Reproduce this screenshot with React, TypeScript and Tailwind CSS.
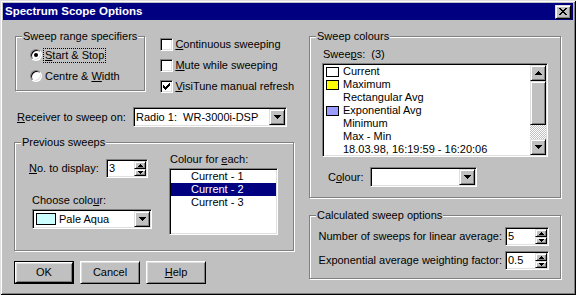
import React from 'react';

const sunken =
  'border border-t-[#808080] border-l-[#808080] border-r-white border-b-white shadow-[inset_1px_1px_0_#000,inset_-1px_-1px_0_#dfdfdf]';
const raised =
  'bg-[#c0c0c0] border border-t-[#dfdfdf] border-l-[#dfdfdf] border-r-black border-b-black shadow-[inset_1px_1px_0_#fff,inset_-1px_-1px_0_#808080]';

const DownArrow = () => (
  <svg width="7" height="4" shapeRendering="crispEdges">
    <path d="M0 0h7v1H0zM1 1h5v1H1zM2 2h3v1H2zM3 3h1v1H3z" fill="#000" />
  </svg>
);

const UpArrow = () => (
  <svg width="7" height="4" shapeRendering="crispEdges">
    <path d="M3 0h1v1H3zM2 1h3v1H2zM1 2h5v1H1zM0 3h7v1H0z" fill="#000" />
  </svg>
);

const SmallUp = () => (
  <svg width="5" height="3" shapeRendering="crispEdges">
    <path d="M2 0h1v1H2zM1 1h3v1H1zM0 2h5v1H0z" fill="#000" />
  </svg>
);

const SmallDown = () => (
  <svg width="5" height="3" shapeRendering="crispEdges">
    <path d="M0 0h5v1H0zM1 1h3v1H1zM2 2h1v1H2z" fill="#000" />
  </svg>
);

function Group({ label, className, children }: { label: string; className: string; children?: React.ReactNode }) {
  return (
    <div className={`relative border border-[#808080] shadow-[inset_1px_1px_0_#fff,1px_1px_0_#fff] ${className}`}>
      <span className="absolute -top-[7px] left-[6px] bg-[#c0c0c0] px-[1px] whitespace-nowrap">{label}</span>
      {children}
    </div>
  );
}

function Checkbox({ checked, children }: { checked?: boolean; children: React.ReactNode }) {
  return (
    <div className="flex items-center h-[13px]">
      <div className={`${sunken} bg-white w-[13px] h-[13px] flex items-center justify-center`}>
        {checked && (
          <svg width="7" height="7" shapeRendering="crispEdges">
            <path
              d="M6 0h1v3H6zM5 1h1v3H5zM4 2h1v3H4zM3 3h1v3H3zM2 4h1v3H2zM1 3h1v3H1zM0 2h1v3H0z"
              fill="#000"
            />
          </svg>
        )}
      </div>
      <span className="ml-[2px] whitespace-nowrap">{children}</span>
    </div>
  );
}

function Radio({ checked, focused, children }: { checked?: boolean; focused?: boolean; children: React.ReactNode }) {
  return (
    <div className="flex items-center h-[16px]">
      <div
        className={`${sunken} rounded-full bg-white w-[12px] h-[12px] flex items-center justify-center`}
      >
        {checked && <div className="w-[4px] h-[4px] rounded-full bg-black" />}
      </div>
      <span
        className={`ml-[1px] px-[1px] whitespace-nowrap border ${focused ? 'border-dotted border-black' : 'border-transparent'}`}
      >
        {children}
      </span>
    </div>
  );
}

function Combo({ className, children }: { className: string; children?: React.ReactNode }) {
  return (
    <div className={`${sunken} bg-white p-[1px] flex h-[20px] ${className}`}>
      <div className="flex-1 flex items-center min-w-0">{children}</div>
      <div className={`${raised} w-[16px] h-[16px] flex items-center justify-center`}>
        <DownArrow />
      </div>
    </div>
  );
}

function Spinner({ value, className }: { value: string; className: string }) {
  return (
    <div className={`${sunken} bg-white p-[1px] flex h-[19px] ${className}`}>
      <div className="flex-1 flex items-center pl-[1px]">{value}</div>
      <div className="w-[12px] flex flex-col">
        <div className={`${raised} h-[8px] flex items-center justify-center`}>
          <SmallUp />
        </div>
        <div className={`${raised} flex-1 flex items-center justify-center`}>
          <SmallDown />
        </div>
      </div>
    </div>
  );
}

function PushButton({ isDefault, children }: { isDefault?: boolean; children: React.ReactNode }) {
  return (
    <div className={`w-[60px] h-[23px] ${isDefault ? 'border border-black' : ''}`}>
      <div className="w-full h-full bg-[#c0c0c0] border border-t-white border-l-white border-r-black border-b-black shadow-[inset_1px_1px_0_#dfdfdf,inset_-1px_-1px_0_#808080] flex items-center justify-center">
        {children}
      </div>
    </div>
  );
}

const sweeps = [
  { name: 'Current', swatch: 'bg-white' },
  { name: 'Maximum', swatch: 'bg-[#ffff00]' },
  { name: 'Rectangular Avg', swatch: '' },
  { name: 'Exponential Avg', swatch: 'bg-[#9c9cff]' },
  { name: 'Minimum', swatch: '' },
  { name: 'Max - Min', swatch: '' },
  { name: '18.03.98, 16:19:59 - 16:20:06', swatch: '' },
];

export default function App() {
  return (
    <div className="w-[576px] h-[295px] overflow-hidden bg-[#c0c0c0] text-black text-[11px] leading-[13px] font-['Liberation_Sans',Arial,sans-serif] shadow-[inset_1px_1px_0_#dfdfdf,inset_-1px_-1px_0_#000,inset_2px_2px_0_#fff,inset_-2px_-2px_0_#808080]">
      {/* Title bar */}
      <div className="mx-[3px] mt-[3px] h-[17px] bg-[#000080] flex items-center pl-[2px] pr-[2px]">
        <span className="text-white font-bold text-[11.5px]">Spectrum Scope Options</span>
        <div className={`${raised} ml-auto w-[16px] h-[14px] flex items-center justify-center`}>
          <svg width="8" height="7" shapeRendering="crispEdges">
            <path
              d="M0 0h2v1H0zM6 0h2v1H6zM1 1h2v1H1zM5 1h2v1H5zM2 2h4v1H2zM3 3h2v1H3zM2 4h4v1H2zM1 5h2v1H1zM5 5h2v1H5zM0 6h2v1H0zM6 6h2v1H6z"
              fill="#000"
            />
          </svg>
        </div>
      </div>

      <div className="flex">
        {/* Left column */}
        <div className="ml-[14px] w-[280px]">
          <div className="flex items-start h-[71px]">
            <Group label="Sweep range specifiers" className="ml-[1px] mt-[16px] w-[133px] h-[55px]">
              <div className="pl-[14px] pt-[10px] flex flex-col gap-[5px]">
                <Radio checked focused>
                  <u>S</u>tart &amp; Stop
                </Radio>
                <Radio>
                  Centre &amp; <u>W</u>idth
                </Radio>
              </div>
            </Group>
            <div className="ml-[15px] mt-[18px] flex flex-col gap-[8px]">
              <Checkbox>
                <u>C</u>ontinuous sweeping
              </Checkbox>
              <Checkbox>
                <u>M</u>ute while sweeping
              </Checkbox>
              <Checkbox checked>
                <u>V</u>isiTune manual refresh
              </Checkbox>
            </div>
          </div>

          <div className="mt-[16px] h-[20px] flex items-center">
            <span className="ml-[3px] w-[116px] whitespace-nowrap">
              <u>R</u>eceiver to sweep on:
            </span>
            <Combo className="w-[154px]">
              <span className="pl-[1px] whitespace-pre">Radio 1:  WR-3000i-DSP</span>
            </Combo>
          </div>

          <Group label="Previous sweeps" className="mt-[15px] w-[280px] h-[109px]">
            <div className="flex">
              <div className="pl-[14px] w-[140px]">
                <div className="mt-[16px] h-[19px] flex items-center">
                  <span className="w-[77px] whitespace-nowrap">
                    <u>N</u>o. to display:
                  </span>
                  <Spinner value="3" className="w-[42px]" />
                </div>
                <div className="ml-[3px] mt-[16px] whitespace-nowrap">
                  Choose colo<u>u</u>r:
                </div>
                <Combo className="ml-[3px] mt-[2px] w-[120px]">
                  <div className="ml-[2px] w-[20px] h-[12px] border border-black bg-[#ccffff]" />
                  <span className="ml-[3px]">Pale Aqua</span>
                </Combo>
              </div>
              <div className="ml-[14px] pt-[10px]">
                <div className="ml-[1px] whitespace-nowrap">
                  Colour for <u>e</u>ach:
                </div>
                <div className={`${sunken} bg-white p-[1px] mt-[2px] w-[109px] h-[67px]`}>
                  <div className="h-[13px] pl-[20px]">Current - 1</div>
                  <div className="h-[13px] pl-[20px] bg-[#000080] text-white">Current - 2</div>
                  <div className="h-[13px] pl-[20px]">Current - 3</div>
                </div>
              </div>
            </div>
          </Group>

          <div className="mt-[10px] flex gap-[6px]">
            <PushButton isDefault>OK</PushButton>
            <PushButton>Cancel</PushButton>
            <PushButton>
              <span>
                <u>H</u>elp
              </span>
            </PushButton>
          </div>
        </div>

        {/* Right column */}
        <div className="ml-[15px] w-[252px]">
          <Group label="Sweep colours" className="mt-[16px] w-[252px] h-[162px]">
            <div className="pl-[13px] pt-[11px]">
              <div className="whitespace-pre">
                Swee<u>p</u>s:  (3)
              </div>
              <div className={`${sunken} bg-white p-[1px] -ml-[1px] mt-[2px] w-[226px] h-[94px] flex`}>
                <div className="flex-1 min-w-0">
                  {sweeps.map((s) => (
                    <div key={s.name} className="h-[13px] flex items-center pl-[2px] whitespace-nowrap">
                      <div
                        className={`w-[13px] h-[10px] mr-[4px] ${s.swatch ? `border border-black ${s.swatch}` : ''}`}
                      />
                      {s.name}
                    </div>
                  ))}
                </div>
                <div className="w-[16px] flex flex-col">
                  <div className={`${raised} h-[16px] flex items-center justify-center`}>
                    <UpArrow />
                  </div>
                  <div className={`${raised} h-[44px]`} />
                  <div className="flex-1 bg-[repeating-conic-gradient(#fff_0_25%,#c0c0c0_0_50%)] bg-[length:2px_2px]" />
                  <div className={`${raised} h-[16px] flex items-center justify-center`}>
                    <DownArrow />
                  </div>
                </div>
              </div>
              <div className="mt-[10px] h-[20px] flex items-center">
                <span className="ml-[5px] w-[42px]">
                  C<u>o</u>lour:
                </span>
                <Combo className="w-[107px]" />
              </div>
            </div>
          </Group>

          <Group label="Calculated sweep options" className="mt-[17px] w-[252px] h-[64px]">
            <div className="pt-[11px] pr-[11px] flex flex-col gap-[5px]">
              <div className="h-[19px] flex items-center justify-end">
                <span className="mr-[3px] whitespace-nowrap">Number of sweeps for linear average:</span>
                <Spinner value="5" className="w-[44px]" />
              </div>
              <div className="h-[19px] flex items-center justify-end">
                <span className="mr-[3px] whitespace-nowrap">Exponential average weighting factor:</span>
                <Spinner value="0.5" className="w-[44px]" />
              </div>
            </div>
          </Group>
        </div>
      </div>
    </div>
  );
}
